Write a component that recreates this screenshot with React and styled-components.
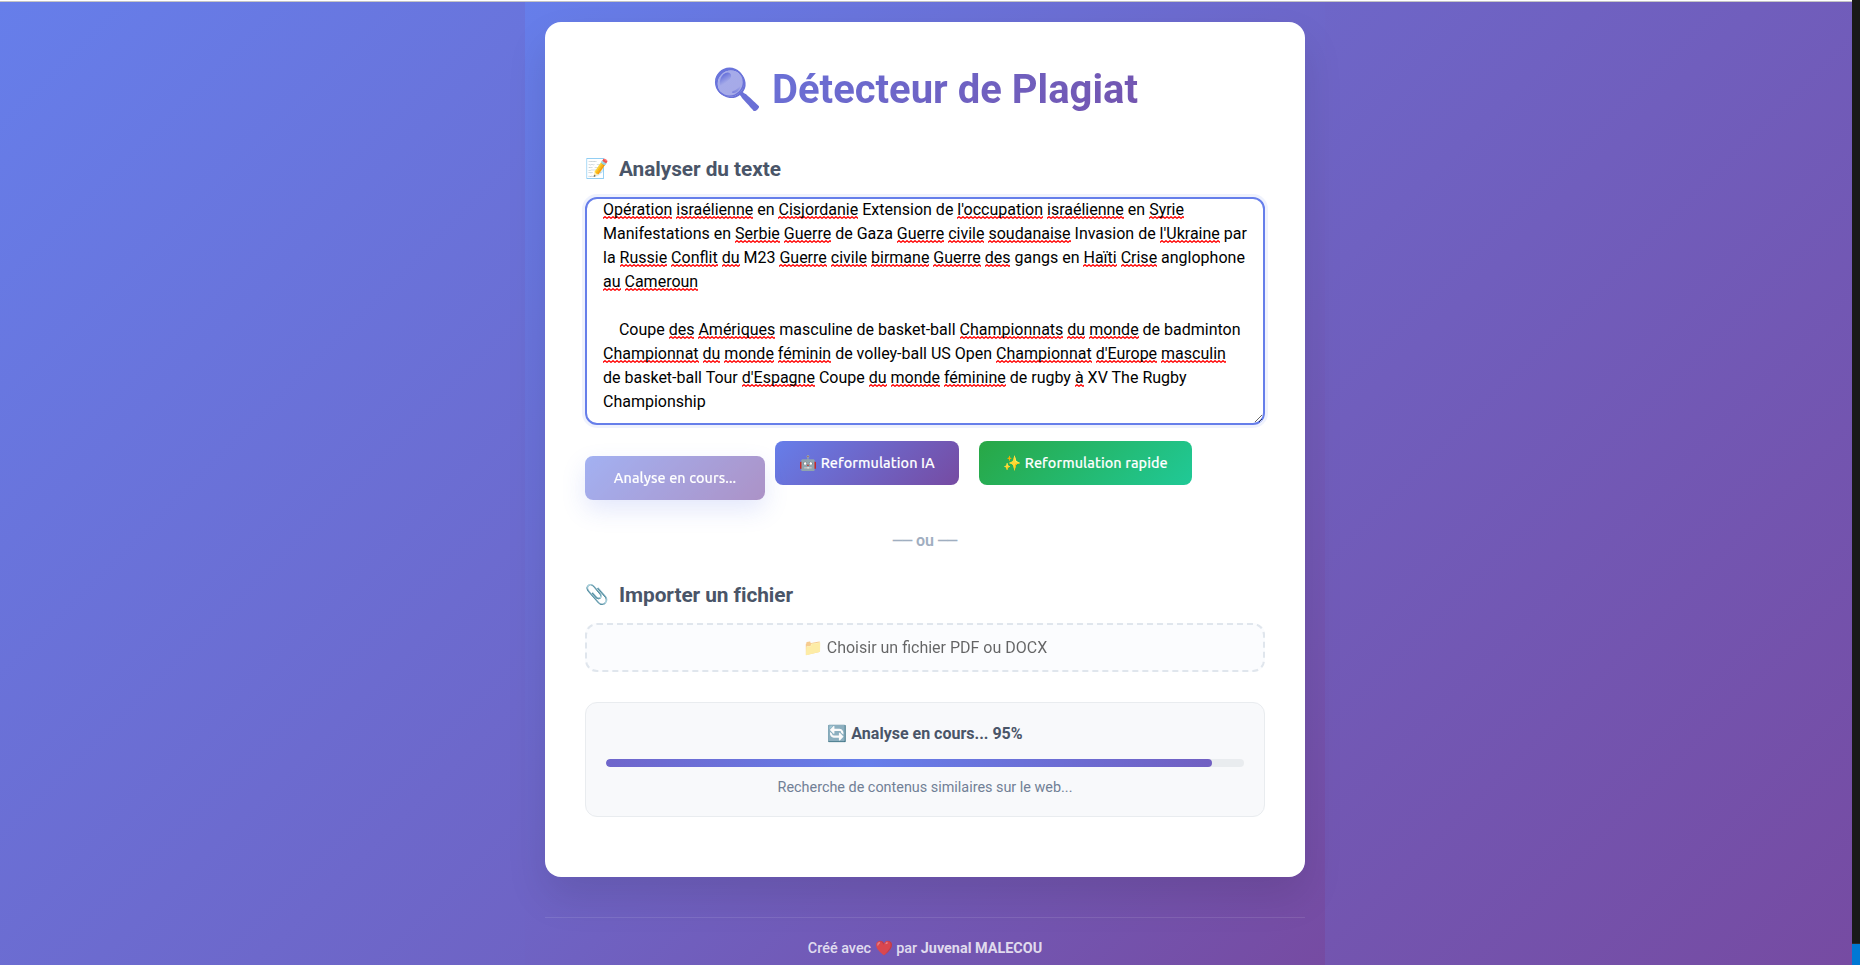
import React from "react";
import styled, { createGlobalStyle, css } from "styled-components";

const GlobalStyle = createGlobalStyle`
  * { box-sizing: border-box; margin: 0; padding: 0; }
  html, body { height: 965px; overflow: hidden; }
  body { background: #191919; font-family: Roboto, "Noto Sans", sans-serif; color: #4a5568; }
`;

const brand = "linear-gradient(135deg, #667eea 0%, #764ba2 100%)";

const Screen = styled.div`
  display: grid;
  grid-template-columns: 1852px 8px;
  height: 965px;
  overflow: hidden;
`;
const Viewport = styled.div`
  display: flex;
  flex-direction: column;
  height: 965px;
  overflow: hidden;
`;
const TopEdge = styled.div`
  flex: none;
  height: 2px;
  background: #fff;
  border-bottom: 1px solid #c4c4c4;
`;
const Page = styled.div`
  flex: 1;
  min-height: 0;
  padding-right: 2px;
  background: ${brand};
`;
const SideStrip = styled.div`
  display: flex;
  flex-direction: column;
  justify-content: flex-end;
  background: #191919;
`;
const StatusEnd = styled.div`
  height: 22px;
  background: #0078d4;
  border-top: 1px solid #2b2b2b;
`;

const Container = styled.div`
  width: 800px;
  height: 970px;
  margin: 0 auto;
  padding: 20px;
  background: ${brand};
`;
const Card = styled.main`
  height: 855px;
  padding: 40px;
  border-radius: 16px;
  background: #fff;
  box-shadow: 0 20px 40px rgba(0, 0, 0, 0.1);
`;
const Title = styled.h1`
  height: 55px;
  line-height: 55px;
  margin-bottom: 39px;
  font-size: 40px;
  font-weight: 700;
  text-align: center;
  color: transparent;
  background: ${brand};
  background-clip: text;
  -webkit-background-clip: text;
`;
const SectionTitle = styled.h2`
  display: flex;
  gap: 8px;
  height: 27px;
  margin-bottom: 14px;
  font-size: 20.8px;
  font-weight: 700;
  letter-spacing: -0.05px;
  line-height: 26px;
`;
const SectionIcon = styled.span`
  width: 26px;
  font-size: 19.2px;
`;
const Editor = styled.div`
  height: 228px;
  padding: 0 16px;
  border: 2px solid #667eea;
  border-radius: 12px;
  box-shadow: 0 0 0 3px rgba(102, 126, 234, 0.1);
  overflow: hidden;
  resize: vertical;
  color: #000;
  font-size: 16px;
  line-height: 24px;
`;
const Lines = styled.div`
  margin-top: -1px;
`;
const Line = styled.p`
  height: 24px;
  white-space: pre;
`;
const squiggle =
  "data:image/svg+xml,%3Csvg xmlns='http://www.w3.org/2000/svg' width='4' height='3'%3E%3Cpath d='M-2 .7L0 2.3 2 .7 4 2.3 6 .7' fill='none' stroke='red' stroke-width='1.3'/%3E%3C/svg%3E";
const Misspelt = styled.span`
  background: url("${squiggle}") left bottom / 4px 3px repeat-x;
`;
const Actions = styled.div`
  display: flex;
  height: 59px;
  margin-top: 16px;
`;
const Button = styled.button`
  width: ${(p) => p.$width}px;
  height: 44px;
  margin-right: ${(p) => p.$gap || 0}px;
  border: 0;
  border-radius: 8px;
  background: ${(p) => (p.$green ? "linear-gradient(135deg, #28a745 0%, #20c997 100%)" : brand)};
  color: #fff;
  font: 500 14.4px/20px Ubuntu, "Noto Sans", sans-serif;
  letter-spacing: 0.09px;
  -webkit-text-stroke: 0.12px #fff;
  white-space: nowrap;
  ${(p) =>
    p.$busy &&
    css`
      align-self: flex-end;
      opacity: 0.6;
      box-shadow: 0 10px 25px rgba(102, 126, 234, 0.3);
    `}
`;
const Separator = styled.div`
  height: 24px;
  margin: 29px 0;
  text-align: center;
  color: #a0aec0;
  font-size: 16px;
  font-weight: 600;
  line-height: 24px;
`;
const Dash = styled.span`
  font-family: "DejaVu Sans Mono", monospace;
  font-weight: 400;
  line-height: 1;
`;
const DropZone = styled.label`
  display: flex;
  align-items: center;
  justify-content: center;
  height: 49px;
  border: 2px dashed #e0e6ed;
  border-radius: 12px;
  background: #fbfcfe;
  font-size: 16px;
  color: #000;
`;
const DropLabel = styled.span`
  opacity: 0.6;
`;
const Progress = styled.section`
  height: 115px;
  margin-top: 30px;
  padding: 20px;
  border: 1px solid #e9ecef;
  border-radius: 12px;
  background: #f8f9fb;
  text-align: center;
`;
const ProgressTitle = styled.div`
  height: 21px;
  margin-bottom: 15px;
  font-size: 16px;
  font-weight: 700;
  line-height: 21px;
`;
const Track = styled.div`
  height: 8px;
  border-radius: 4px;
  background: #e9ecef;
  overflow: hidden;
`;
const Fill = styled.div`
  height: 8px;
  border-radius: 4px;
  background: linear-gradient(90deg, #6f66cb 0%, #667eea 43%, #7160c2 100%);
`;
const ProgressNote = styled.div`
  margin-top: 10px;
  font-size: 14.4px;
  line-height: 22px;
  color: #718096;
`;
const Footer = styled.footer`
  height: 60px;
  margin-top: 40px;
  padding-top: 20px;
  border-top: 1px solid rgba(255, 255, 255, 0.1);
  text-align: center;
  font-size: 14.4px;
  font-weight: 500;
  line-height: 22px;
  color: rgba(255, 255, 255, 0.8);
`;
const Author = styled.strong`
  font-weight: 700;
`;

// Words between asterisks carry the spell checker's underline.
const lines = [
  "*Opération* *israélienne* en *Cisjordanie* Extension de *l'occupation* *israélienne* en *Syrie*",
  "Manifestations en *Serbie* *Guerre* de Gaza *Guerre* *civile* *soudanaise* Invasion de *l'Ukraine* par",
  "la *Russie* *Conflit* *du* M23 *Guerre* *civile* *birmane* *Guerre* *des* gangs en *Haïti* *Crise* anglophone",
  "*au* *Cameroun*",
  "",
  "    Coupe *des* *Amériques* masculine de basket-ball *Championnats* *du* *monde* de badminton",
  "*Championnat* *du* *monde* *féminin* de volley-ball US Open *Championnat* *d'Europe* *masculin*",
  "de basket-ball Tour *d'Espagne* Coupe *du* *monde* *féminine* de rugby *à* XV The Rugby",
  "Championship",
];

const progress = 95;

export default function App() {
  return (
    <>
      <GlobalStyle />
      <Screen>
        <Viewport>
          <TopEdge />
          <Page>
            <Container>
              <Card>
                <Title>🔍 Détecteur de Plagiat</Title>
                <SectionTitle><SectionIcon>📝</SectionIcon>Analyser du texte</SectionTitle>
                <Editor>
                  <Lines>
                    {lines.map((line, i) => (
                      <Line key={i}>
                        {line.split("*").map((part, j) =>
                          j % 2 ? <Misspelt key={j}>{part}</Misspelt> : part
                        )}
                      </Line>
                    ))}
                  </Lines>
                </Editor>
                <Actions>
                  <Button $width={180} $gap={10} $busy>Analyse en cours...</Button>
                  <Button $width={184} $gap={20}>🤖 Reformulation IA</Button>
                  <Button $width={213} $green>✨ Reformulation rapide</Button>
                </Actions>
                <Separator><Dash>──</Dash> ou <Dash>──</Dash></Separator>
                <SectionTitle><SectionIcon>📎</SectionIcon>Importer un fichier</SectionTitle>
                <DropZone><DropLabel>📁 Choisir un fichier PDF ou DOCX</DropLabel></DropZone>
                <Progress>
                  <ProgressTitle>🔄 Analyse en cours... {progress}%</ProgressTitle>
                  <Track><Fill style={{ width: `${progress}%` }} /></Track>
                  <ProgressNote>Recherche de contenus similaires sur le web...</ProgressNote>
                </Progress>
              </Card>
              <Footer>Créé avec ❤️ par <Author>Juvenal MALECOU</Author></Footer>
            </Container>
          </Page>
        </Viewport>
        <SideStrip><StatusEnd /></SideStrip>
      </Screen>
    </>
  );
}
